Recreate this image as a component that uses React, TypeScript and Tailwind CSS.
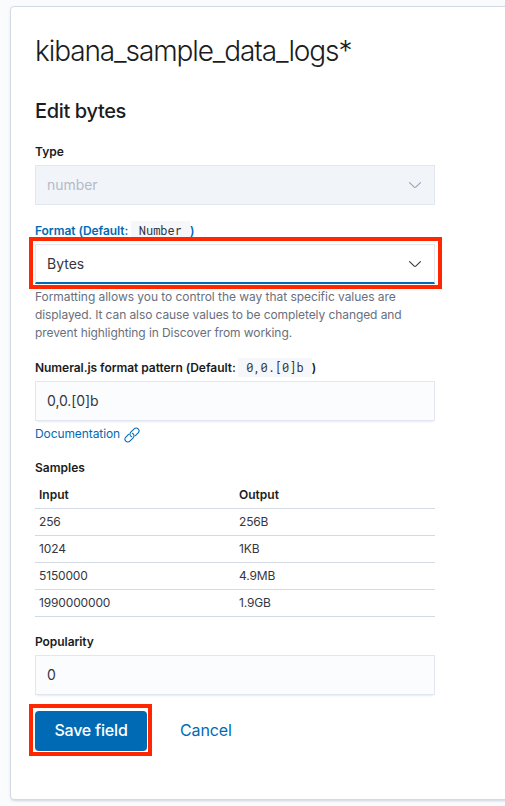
import type { ReactNode } from "react";

const samples = [
  ["256", "256B"],
  ["1024", "1KB"],
  ["5150000", "4.9MB"],
  ["1990000000", "1.9GB"],
];

const fieldShadow =
  "shadow-[0_1px_1px_-1px_rgba(152,162,179,0.2),0_3px_2px_-2px_rgba(152,162,179,0.2)]";

function Code({ children }: { children: ReactNode }) {
  return (
    <code className="ml-[2.5px] h-[19px] whitespace-pre bg-[#f5f7fa] px-2 font-['Roboto_Mono','DejaVu_Sans_Mono',monospace] text-[12px] leading-[19px] font-normal tracking-[-0.02px] text-[#343741]">
      {children}
    </code>
  );
}

function Chevron({ className }: { className: string }) {
  return (
    <svg width="16" height="16" viewBox="0 0 16 16" className={className} aria-hidden="true">
      <path
        fill="currentColor"
        d="M13.069 5.157L8.384 9.768a.546.546 0 01-.768 0L2.93 5.158a.552.552 0 00-.771 0 .53.53 0 000 .759l4.684 4.61c.641.631 1.672.63 2.312 0l4.684-4.61a.53.53 0 000-.76.552.552 0 00-.771 0z"
      />
    </svg>
  );
}

function LinkIcon() {
  return (
    <svg width="16" height="16" viewBox="0 0 16 16" className="mt-px" aria-hidden="true">
      <g
        transform="translate(8 8) rotate(-45)"
        fill="none"
        stroke="currentColor"
        strokeWidth="1.05"
        strokeLinecap="round"
      >
        <path d="M1.7 2.8H5.9A2.8 2.8 0 0 0 5.9 -2.8H1.1A2.8 2.8 0 0 0 -1.5 1" />
        <path d="M-1.7 -2.8H-5.9A2.8 2.8 0 0 0 -5.9 2.8H-1.1A2.8 2.8 0 0 0 1.5 -1" />
      </g>
    </svg>
  );
}

export default function App() {
  return (
    <div className="h-[806px] w-[505px] overflow-hidden bg-[#fafbfd] pt-[6px] pl-[10px] font-['Inter',sans-serif] text-[#343741]">
      <main className="relative h-[794px] w-[540px] rounded-[4px] border border-[#d3dae6] bg-white px-6 pt-6 shadow-[0_2px_2px_-1px_rgba(152,162,179,0.3),0_1px_5px_-2px_rgba(152,162,179,0.3)]">
        <h1 className="h-10 whitespace-nowrap text-[28px] leading-10 font-light tracking-[-1.1px] text-[#1a1c21]">
          kibana_sample_data_logs*
        </h1>
        <h2 className="mt-6 h-8 text-[20px] leading-8 font-medium tracking-[-0.36px] text-[#1a1c21]">
          Edit bytes
        </h2>

        <form className="flex w-[400px] flex-col">
          <label className="mt-4 h-[18px] text-[12px] leading-[18px] font-semibold text-[#1a1c21]">
            Type
          </label>
          <div className="mt-1 flex h-10 items-center justify-between border border-[#e2e6f0] bg-[#f1f5f9] pr-[11px] pb-px pl-[11px] text-[14px] tracking-[-0.06px] text-[#b5bac8]">
            <span>number</span>
            <Chevron className="text-[#98a2b3]" />
          </div>

          <label className="mt-4 flex h-[19px] items-center whitespace-nowrap text-[12px] leading-[18px] font-semibold tracking-[-0.06px] text-[#006bb4]">
            Format (Default:<Code>Number</Code>)
          </label>
          <div className="mt-1 flex h-10 items-center justify-between border border-b-2 border-[#e6e6f2] border-b-[#006bb4] bg-white pr-[11px] pl-[11px] text-[14px]">
            <span>Bytes</span>
            <Chevron className="text-[#343741]" />
          </div>
          <p className="mt-1 h-[54px] whitespace-nowrap text-[12px] leading-[18px] tracking-[-0.085px] text-[#69707d]">
            <span className="tracking-[-0.045px]">
              Formatting allows you to control the way that specific values are
            </span>
            <br />
            displayed. It can also cause values to be completely changed and
            <br />
            prevent highlighting in Discover from working.
          </p>

          <label className="mt-4 flex h-[19px] items-center whitespace-nowrap text-[12px] leading-[18px] font-semibold tracking-[-0.05px] text-[#1a1c21]">
            Numeral.js format pattern (Default:<Code>0,0.[0]b</Code>)
          </label>
          <div className={`mt-1 flex h-10 items-center border border-[#e2e6f0] bg-[#fbfcfd] px-[11px] pb-px text-[14px] tracking-[-0.1px] ${fieldShadow}`}>
            0,0.[0]b
          </div>
          <a className="mt-1 flex h-[18px] items-center gap-1 text-[12px] leading-[18px] tracking-[-0.09px] text-[#006bb4]">
            Documentation
            <LinkIcon />
          </a>

          <div className="mt-4 h-[18px] text-[12px] leading-[18px] font-semibold text-[#1a1c21]">
            Samples
          </div>
          <table className="mt-1 w-full table-fixed text-left text-[12px] leading-[18px]">
            <thead>
              <tr className="h-[27px] border-b border-[#d3dae6] text-[#1a1c21]">
                <th className="px-1 pt-px pb-0 font-semibold">Input</th>
                <th className="px-1 pt-px pb-0 font-semibold">Output</th>
              </tr>
            </thead>
            <tbody>
              {samples.map(([input, output]) => (
                <tr key={input} className="h-[27px] border-b border-[#d3dae6] tracking-[-0.15px]">
                  <td className="px-1 py-0">{input}</td>
                  <td className="px-1 py-0">{output}</td>
                </tr>
              ))}
            </tbody>
          </table>

          <label className="mt-4 h-[18px] text-[12px] leading-[18px] font-semibold tracking-[-0.06px] text-[#1a1c21]">
            Popularity
          </label>
          <div className={`mt-1 flex h-10 items-center border border-[#e2e6f0] bg-[#fbfcfd] px-[11px] text-[14px] ${fieldShadow}`}>
            0
          </div>

          <div className="mt-4 flex h-10 items-center text-[16px]">
            <button type="button" className="h-10 w-[112px] rounded-[4px] bg-[#006bb4] pb-[2px] font-medium tracking-[-0.2px] text-white">
              Save field
            </button>
            <button type="button" className="ml-[33px] pb-[2px] tracking-[-0.1px] text-[#006bb4]">
              Cancel
            </button>
          </div>
        </form>

        <div className="absolute top-[230px] left-[18px] h-[52px] w-[413px] border-4 border-[#ff2600]" />
        <div className="absolute top-[697px] left-[18px] h-[52px] w-[123px] border-4 border-[#ff2600]" />
      </main>
    </div>
  );
}
